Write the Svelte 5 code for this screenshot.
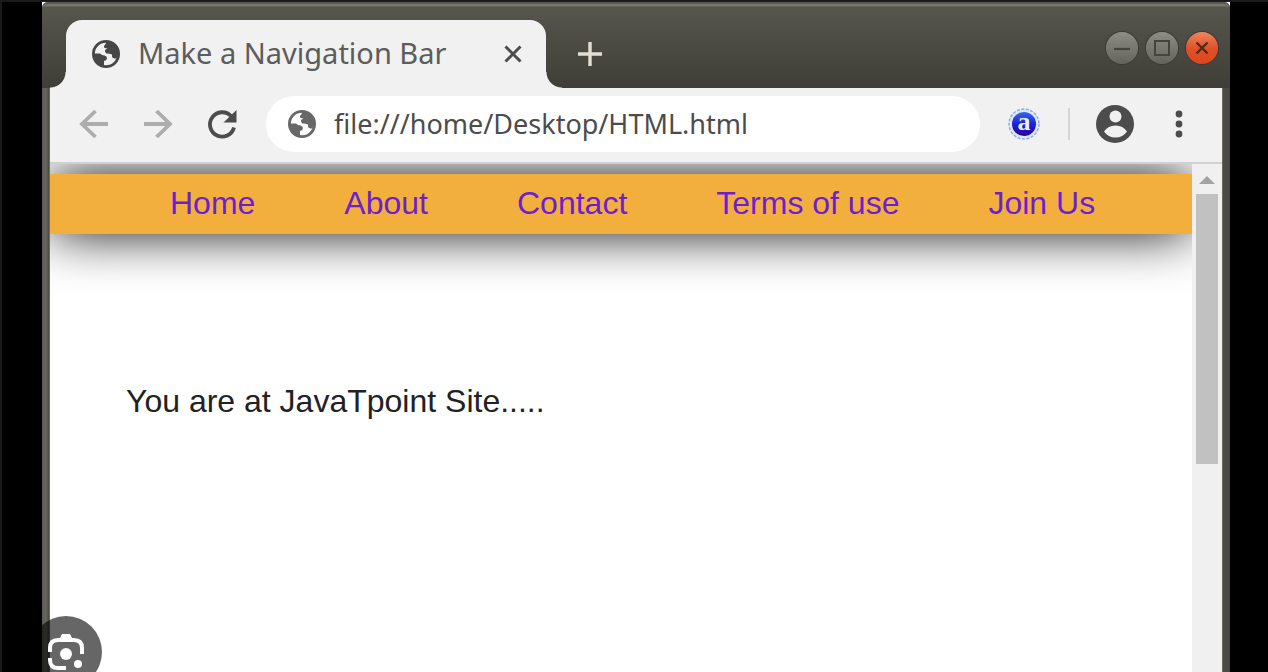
<script>
  const links = ['Home', 'About', 'Contact', 'Terms of use', 'Join Us'];
  let address = $state('file:///home/Desktop/HTML.html');
</script>

{#snippet globe()}
  <svg viewBox="0 0 28 28" aria-hidden="true">
    <circle cx="14" cy="14" r="12.6" fill="none" stroke="currentColor" stroke-width="2.8" />
    <path
      d="M14 1.5C18 .7 23 2.5 26 7Q28 12 26.500 16L24 18.500Q20.500 18.500 20 16.500V14.500Q18 13.500 14.500 13.500Q12.500 12.500 13 10L15.500 8.500Q11.500 8.500 12 6Q14 5 14 1.500ZM1.500 13.500H8Q10 15.500 12.500 15.500Q15 16 15 18.500Q14.500 20.500 12 21V26.500Q4 25 1.500 18Z"
      fill="currentColor"
    />
  </svg>
{/snippet}

<div class="screen">
  <div class="window">
    <header class="titlebar">
      <div class="tab">
        <span class="favicon">{@render globe()}</span>
        <span class="title">Make a Navigation Bar</span>
        <button class="close-tab" aria-label="Close tab">
          <svg viewBox="0 0 18 18"><path d="M1.500 1.500l15 15M16.500 1.500l-15 15" fill="none" stroke="#4c4c4c" stroke-width="3" /></svg>
        </button>
      </div>
      <button class="new-tab" aria-label="New tab">
        <svg viewBox="0 0 24 24"><path d="M12 0v24M0 12h24" fill="none" stroke="#e3dfd3" stroke-width="3.400" /></svg>
      </button>
      <div class="controls">
        <button aria-label="Minimize">
          <svg viewBox="0 0 32 32"><path d="M8 17h16" stroke="#44443e" stroke-width="2.200" /></svg>
        </button>
        <button aria-label="Maximize">
          <svg viewBox="0 0 32 32"><path d="M9 9h14v14H9z" fill="none" stroke="#44443e" stroke-width="2" /></svg>
        </button>
        <button class="quit" aria-label="Close">
          <svg viewBox="0 0 32 32"><path d="M10.500 10.500l11 11M21.500 10.500l-11 11" stroke="#4d2b18" stroke-width="2.400" /></svg>
        </button>
      </div>
    </header>

    <div class="toolbar">
      <button class="tool faded" aria-label="Back">
        <svg viewBox="0 0 28 28"><path d="M28 14H2M15.500 1L2 14l13.500 13" fill="none" stroke="currentColor" stroke-width="3.800" /></svg>
      </button>
      <button class="tool faded" aria-label="Forward">
        <svg viewBox="0 0 28 28"><path d="M0 14h26M12.500 1L26 14 12.500 27" fill="none" stroke="currentColor" stroke-width="3.800" /></svg>
      </button>
      <button class="tool" aria-label="Reload">
        <svg viewBox="0 0 28 28">
          <path d="M23 6A12.200 12.200 0 1 0 26 17.500" fill="none" stroke="currentColor" stroke-width="3.800" />
          <path d="M28.500 0v12.500H15.500z" fill="currentColor" />
        </svg>
      </button>
      <label class="address">
        {@render globe()}
        <input type="text" aria-label="Address" bind:value={address} spellcheck="false" />
      </label>
      <button class="extension" aria-label="Extension">
        <svg viewBox="0 0 32 32">
          <defs>
            <linearGradient id="orb" x2="0" y2="1">
              <stop offset="0" stop-color="#3a68e8" />
              <stop offset="0.500" stop-color="#1c22d8" />
              <stop offset="1" stop-color="#2c0096" />
            </linearGradient>
          </defs>
          <circle cx="16" cy="16" r="15" fill="#dce9f8" stroke="#8ea6e6" stroke-width="1.400" stroke-dasharray="3 1.500" />
          <circle cx="16" cy="16" r="12" fill="url(#orb)" />
          <text x="16" y="22" text-anchor="middle">a</text>
        </svg>
      </button>
      <span class="divider"></span>
      <button class="profile" aria-label="Profile">
        <svg viewBox="0 0 38 38">
          <circle cx="19" cy="19" r="19" fill="#4c4c4c" />
          <circle cx="19.500" cy="11.500" r="6" fill="#f1f1f1" />
          <path d="M8 26.500Q12 20.500 19.500 20.500T31 26.500Q27 32.500 19.500 32.500T8 26.500Z" fill="#f1f1f1" />
        </svg>
      </button>
      <button class="menu" aria-label="Menu">
        <svg viewBox="0 0 8 28"><g fill="#4c4c4c"><circle cx="4" cy="4" r="3.400" /><circle cx="4" cy="14" r="3.400" /><circle cx="4" cy="24" r="3.400" /></g></svg>
      </button>
    </div>

    <div class="viewport">
      <main>
        <nav>
          {#each links as link}
            <a href="#top">{link}</a>
          {/each}
        </nav>
        <p>You are at JavaTpoint Site.....</p>
      </main>
      <div class="scrollbar">
        <svg viewBox="0 0 16 8" aria-hidden="true"><path d="M8 0l8 8H0z" fill="#a3a3a3" /></svg>
        <div class="thumb"></div>
      </div>
    </div>
  </div>

  <button class="lens" aria-label="Search by image">
    <svg viewBox="0 0 36 36">
      <path d="M2 18V14Q2 6 10 6H26Q34 6 34 14V20M2 24V26Q2 34 10 34H18" fill="none" stroke="#fff" stroke-width="4" />
      <path d="M11 6l3-6h8l3 6z" fill="#fff" />
      <circle cx="18" cy="20" r="6" fill="#fff" />
      <circle cx="30" cy="30" r="4" fill="#fff" />
    </svg>
  </button>
</div>

<style>
  :global(body) {
    margin: 0;
    background: #000;
  }
  * {
    box-sizing: border-box;
  }
  button {
    display: flex;
    align-items: center;
    justify-content: center;
    flex: none;
    padding: 0;
    border: 0;
    background: none;
  }
  svg {
    display: block;
  }
  .screen {
    position: relative;
    display: flex;
    min-height: 100vh;
    padding: 0 38px 0 40px;
    overflow: hidden;
    border-top: 2px solid #1a1a1a;
    border-left: 2px solid #1a1a1a;
    background: linear-gradient(#fff, #fff) 40px 0 / calc(100% - 78px) 8px no-repeat #000;
  }
  .window {
    flex: 1;
    min-width: 0;
    display: flex;
    flex-direction: column;
    padding: 0 8px;
    border-radius: 6px 6px 0 0;
    background: linear-gradient(90deg, #5c5c54, #66665e 4px, #4a4a42 7px, #8a8a84 8px, transparent 8px calc(100% - 8px), #8a8a84 calc(100% - 8px), #4c4c44 calc(100% - 7px), #4c4c44 calc(100% - 2px), #403f3a);
  }
  .titlebar {
    display: flex;
    height: 86px;
    margin: 0 -8px;
    padding: 18px 12px 0 24px;
    border-top: 2px solid #5a5a53;
    border-radius: 6px 6px 0 0;
    background: linear-gradient(#77776f 0 2px, #57564d 3px, #3e3d37);
  }
  .tab {
    position: relative;
    display: flex;
    align-items: center;
    width: 480px;
    margin-top: -2px;
    padding: 0 24px 0 26px;
    border-radius: 16px 16px 0 0;
    background: #f1f1f1;
    color: #5c5c5c;
    font: 29px/40px 'Noto Sans', sans-serif;
  }
  .tab::before,
  .tab::after {
    content: '';
    position: absolute;
    bottom: 0;
    width: 16px;
    height: 16px;
    background: radial-gradient(circle at 0 0, transparent 15px, #f1f1f1 16px);
  }
  .tab::before {
    left: -16px;
  }
  .tab::after {
    right: -16px;
    transform: scaleX(-1);
  }
  .favicon {
    color: #474747;
    margin-right: 18px;
  }
  .favicon svg,
  .address svg {
    width: 28px;
    height: 28px;
    flex: none;
  }
  .title {
    flex: 1;
    padding-bottom: 2px;
    white-space: nowrap;
  }
  .close-tab svg {
    width: 18px;
    height: 18px;
  }
  .new-tab {
    width: 24px;
    margin: -2px 0 0 32px;
  }
  .new-tab svg {
    width: 24px;
    height: 24px;
  }
  .controls {
    display: flex;
    gap: 8px;
    margin-left: auto;
    padding-top: 10px;
  }
  .controls button {
    width: 32px;
    height: 32px;
    border-radius: 50%;
    background: linear-gradient(#8d8c85, #64645d);
    box-shadow: 0 0 0 1px #3c3c36;
  }
  .controls svg {
    width: 32px;
  }
  .controls .quit {
    background: linear-gradient(#ef8560, #e0532a 50%, #db4618);
  }
  .toolbar {
    display: flex;
    align-items: center;
    height: 76px;
    padding: 0 39px 2px 30px;
    border-bottom: 2px solid #d0d0d0;
    background: #f1f1f1;
  }
  .tool {
    width: 28px;
    margin-right: 36px;
    color: #4c4c4c;
  }
  .tool + .tool + .tool {
    margin-right: 30px;
  }
  .tool svg {
    width: 28px;
    overflow: visible;
  }
  .faded {
    color: #adadad;
  }
  .address {
    display: flex;
    align-items: center;
    gap: 18px;
    flex: 1;
    min-width: 0;
    height: 56px;
    padding: 0 22px;
    border-radius: 28px;
    background: #fff;
    color: #686868;
  }
  .address input {
    flex: 1;
    min-width: 0;
    height: 56px;
    padding: 0 0 2px;
    border: 0;
    outline: 0;
    background: none;
    color: #4c4c4c;
    font: 27px 'Noto Sans', sans-serif;
  }
  .extension {
    margin-left: 28px;
  }
  .extension svg {
    width: 32px;
  }
  .extension text {
    font: bold 26px 'Liberation Serif', serif;
    fill: #e8f0ff;
  }
  .divider {
    width: 2px;
    height: 32px;
    margin: 0 26px 0 28px;
    background: #d6d6d6;
  }
  .profile svg {
    width: 38px;
  }
  .menu {
    margin-left: 41px;
  }
  .menu svg {
    width: 8px;
  }
  .viewport {
    display: flex;
    flex: 1;
    background: #fff;
  }
  main {
    flex: 1;
    min-width: 0;
    padding-top: 10px;
    overflow: hidden;
    color: #222;
    font: 32px/58px 'Liberation Sans', sans-serif;
  }
  nav {
    display: flex;
    gap: 89px;
    height: 60px;
    padding-left: 120px;
    background: #f3af3d;
    box-shadow: 0 0 54px -2px #000;
  }
  nav a {
    color: #6d1fd0;
    text-decoration: none;
    white-space: nowrap;
  }
  p {
    margin: 138px 76px 0;
  }
  .scrollbar {
    display: flex;
    flex-direction: column;
    align-items: center;
    gap: 10px;
    width: 30px;
    padding-top: 12px;
    background: #f0f0f0;
  }
  .scrollbar svg {
    width: 16px;
  }
  .thumb {
    width: 22px;
    height: 270px;
    background: #c1c1c1;
  }
  .lens {
    position: absolute;
    left: 28px;
    bottom: -16px;
    width: 72px;
    height: 72px;
    border-radius: 50%;
    background: rgba(0, 0, 0, 0.6);
  }
  .lens svg {
    width: 36px;
  }
</style>
